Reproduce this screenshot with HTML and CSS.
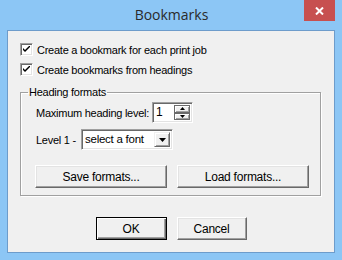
FILE: index.html
```html
<!DOCTYPE html>
<html lang="en">
<head>
    <meta charset="UTF-8">
    <title>Bookmarks</title>
    <link rel="stylesheet" href="styles.css">
</head>
<body>
    <div class="window">
        <div class="titlebar">
            <span></span>
            <span class="title">Bookmarks</span>
            <span class="close">
                <svg width="9" height="8" viewBox="0 0 9 8"><path d="M1 0.5 L8 7.5 M8 0.5 L1 7.5" stroke="#fff" stroke-width="2"/></svg>
            </span>
        </div>
        <div class="client">
            <label class="check-row">
                <span class="checkbox">
                    <svg width="7" height="7" viewBox="0 0 7 7"><path d="M0 2 L0 4 L2 6 L7 1 L7 -1 L2 4 Z" fill="#000"/></svg>
                </span>
                Create a bookmark for each print job
            </label>
            <label class="check-row">
                <span class="checkbox">
                    <svg width="7" height="7" viewBox="0 0 7 7"><path d="M0 2 L0 4 L2 6 L7 1 L7 -1 L2 4 Z" fill="#000"/></svg>
                </span>
                Create bookmarks from headings
            </label>

            <fieldset class="group">
                <legend>Heading formats</legend>
                <div class="field-row">
                    <span class="field-label">Maximum heading level:</span>
                    <div class="spin-edit">
                        <span class="spin-value">1</span>
                        <div class="spin-buttons">
                            <span class="spin-btn"><svg width="5" height="3" viewBox="0 0 5 3"><path d="M2.5 0 L5 3 L0 3 Z" fill="#000"/></svg></span>
                            <span class="spin-btn"><svg width="5" height="3" viewBox="0 0 5 3"><path d="M0 0 L5 0 L2.5 3 Z" fill="#000"/></svg></span>
                        </div>
                    </div>
                </div>
                <div class="field-row level-row">
                    <span class="field-label">Level 1 -</span>
                    <div class="combo">
                        <span class="combo-value">select a font</span>
                        <span class="combo-btn"><svg width="7" height="4" viewBox="0 0 7 4"><path d="M0 0 L7 0 L3.5 4 Z" fill="#000"/></svg></span>
                    </div>
                </div>
                <div class="format-buttons">
                    <button class="btn wide">Save formats...</button>
                    <button class="btn wide">Load formats...</button>
                </div>
            </fieldset>

            <div class="dialog-buttons">
                <button class="btn default">OK</button>
                <button class="btn">Cancel</button>
            </div>
        </div>
    </div>
</body>
</html>
```

FILE: styles.css
```css
body {
    margin: 0;
    padding: 0;
    font-family: "Liberation Sans", Arial, sans-serif;
    font-size: 11px;
    letter-spacing: -0.25px;
    color: #000;
}

.window {
    width: 342px;
    height: 260px;
    background: #8cc6f5;
    box-sizing: border-box;
}

/* title bar */
.titlebar {
    height: 30px;
    display: grid;
    grid-template-columns: 1fr auto 1fr;
}
.title {
    font-family: "Open Sans", sans-serif;
    font-size: 14px;
    letter-spacing: 0;
    color: #2a2a2a;
    line-height: 30px;
    padding-left: 1px;
}
.close {
    justify-self: end;
    width: 31px;
    height: 21px;
    margin-right: 7px;
    background: #c75050;
    display: flex;
    align-items: center;
    justify-content: center;
}

/* dialog body */
.client {
    margin-left: 7px;
    width: 328px;
    height: 223px;
    box-sizing: border-box;
    border: 1px solid #6d9ccb;
    background: #f0f0f0;
    padding: 12px 0 0 12px;
    display: flex;
    flex-direction: column;
}

.check-row {
    display: flex;
    align-items: center;
    gap: 4px;
    height: 13px;
    margin-bottom: 7px;
    white-space: nowrap;
}
.checkbox {
    width: 13px;
    height: 13px;
    box-sizing: border-box;
    background: #fff;
    border-top: 1px solid #a0a0a0;
    border-left: 1px solid #a0a0a0;
    border-bottom: 1px solid #fff;
    border-right: 1px solid #fff;
    box-shadow: inset 1px 1px #696969, inset -1px -1px #e3e3e3;
    display: flex;
    align-items: center;
    justify-content: center;
}

/* group box */
.group {
    margin: 2px 0 0 0;
    width: 301px;
    height: 111px;
    box-sizing: border-box;
    border: 1px solid #a0a0a0;
    box-shadow: 1px 1px #fff, inset 1px 1px #fff;
    padding: 3px 0 0 15px;
}
.group legend {
    padding: 0 1px;
    margin-left: -8px;
    line-height: 14px;
}

.field-row {
    display: flex;
    align-items: center;
    height: 21px;
}
.field-label {
    flex-shrink: 0;
    white-space: nowrap;
    width: 116px;
}
.level-row {
    margin-top: 6px;
}
.level-row .field-label {
    width: 45px;
}

.spin-edit {
    width: 41px;
    height: 21px;
    box-sizing: border-box;
    background: #fff;
    border-top: 1px solid #a0a0a0;
    border-left: 1px solid #a0a0a0;
    border-bottom: 1px solid #fff;
    border-right: 1px solid #fff;
    box-shadow: inset 1px 1px #696969, inset -1px -1px #e3e3e3;
    display: flex;
    padding: 2px;
}
.spin-value {
    flex: 1;
    font-size: 12px;
    line-height: 15px;
    padding-left: 1px;
}
.spin-buttons {
    display: flex;
    flex-direction: column;
    width: 16px;
}
.spin-btn {
    flex: 1;
    box-sizing: border-box;
    background: #f0f0f0;
    border: 1px solid #6a6a6a;
    box-shadow: inset 1px 1px #fff, inset -1px -1px #a0a0a0;
    display: flex;
    align-items: center;
    justify-content: center;
}

.combo {
    width: 92px;
    height: 21px;
    box-sizing: border-box;
    background: #fff;
    border-top: 1px solid #a0a0a0;
    border-left: 1px solid #a0a0a0;
    border-bottom: 1px solid #fff;
    border-right: 1px solid #fff;
    box-shadow: inset 1px 1px #696969, inset -1px -1px #e3e3e3;
    display: flex;
    padding: 2px;
}
.combo-value {
    flex: 1;
    font-size: 11.5px;
    line-height: 15px;
    padding-left: 1px;
    white-space: nowrap;
    overflow: hidden;
}
.combo-btn {
    width: 16px;
    flex-shrink: 0;
    box-sizing: border-box;
    background: #f0f0f0;
    border-top: 1px solid #f0f0f0;
    border-left: 1px solid #f0f0f0;
    border-bottom: 1px solid #696969;
    border-right: 1px solid #696969;
    box-shadow: inset 1px 1px #fff, inset -1px -1px #a0a0a0;
    display: flex;
    align-items: center;
    justify-content: center;
}

/* buttons */
.btn {
    font-family: "Liberation Sans", Arial, sans-serif;
    font-size: 12px;
    letter-spacing: -0.25px;
    color: #000;
    background: #f0f0f0;
    height: 23px;
    width: 70px;
    padding: 0;
    box-sizing: border-box;
    border-top: 1px solid #fff;
    border-left: 1px solid #fff;
    border-bottom: 1px solid #696969;
    border-right: 1px solid #696969;
    box-shadow: inset -1px -1px #a0a0a0, inset 1px 1px #e3e3e3;
}
.btn.wide {
    width: 132px;
}
.btn.default {
    width: 71px;
    border: 1px solid #000;
    box-shadow: inset 1px 1px #fff, inset -1px -1px #696969, inset -2px -2px #a0a0a0;
}

.format-buttons {
    display: flex;
    gap: 10px;
    margin-top: 15px;
    margin-left: -1px;
}

.dialog-buttons {
    display: flex;
    justify-content: center;
    gap: 10px;
    margin-top: 21px;
    margin-left: -12px;
}
```
